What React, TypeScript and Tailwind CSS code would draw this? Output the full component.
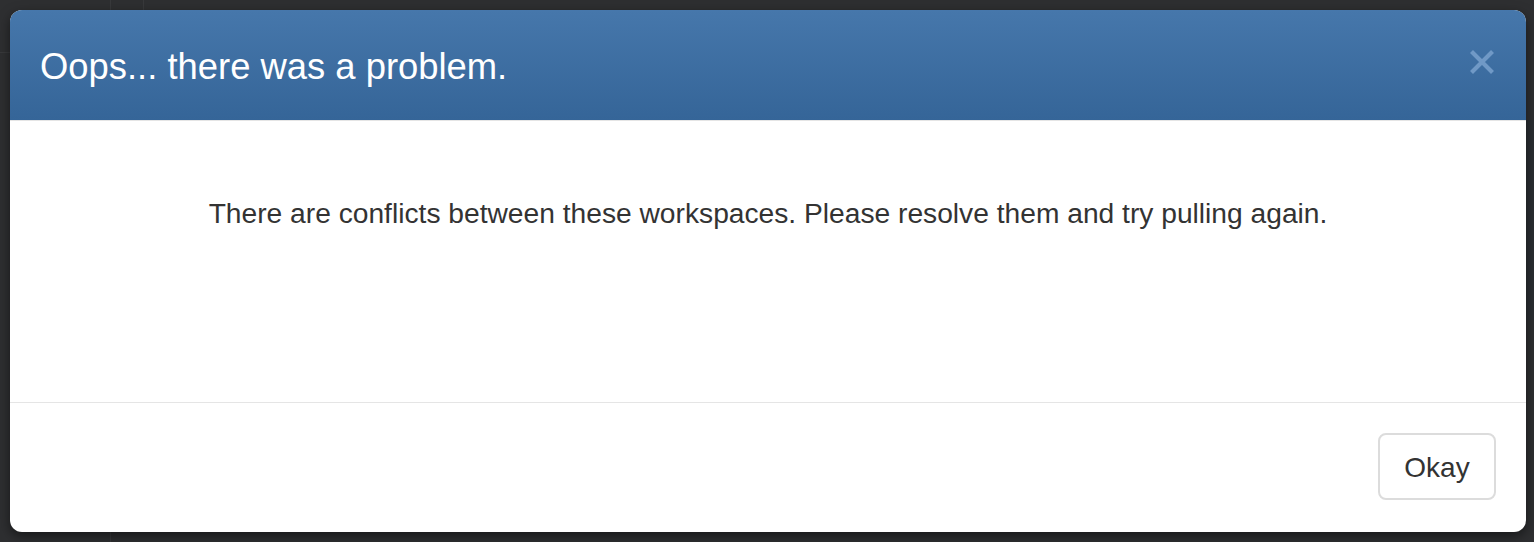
import React from "react";

export default function App() {
  return (
    <div
      className="relative w-[1534px] h-[542px] bg-[#2e2f31] overflow-hidden p-[10px]"
      style={{ fontFamily: '"Liberation Sans", Arial, sans-serif' }}
    >
      {/* faint backdrop lines */}
      <div className="absolute left-[110px] top-0 w-px h-[10px] bg-[#38393b]" />
      <div className="absolute left-[143px] top-0 w-px h-[10px] bg-[#38393b]" />
      <div className="absolute left-[110px] bottom-0 w-px h-[10px] bg-[#38393b]" />
      <div className="absolute left-0 top-[52px] w-[10px] h-px bg-[#38393b]" />
      <div className="absolute right-0 top-[120px] w-[8px] h-[200px] bg-[#2a2e32]" />

      <div className="relative flex flex-col h-[522px] w-[1516px] rounded-[12px] bg-white overflow-hidden shadow-[0_4px_12px_rgba(0,0,0,0.5)]">
        <div className="flex items-center justify-between h-[111px] px-[30px] bg-gradient-to-b from-[#4677ab] to-[#356598] border-b-[1px] border-[#e5e5e5]">
          <h4 className="text-[36.4px] leading-[40px] text-white font-normal pt-[4px]">
            Oops... there was a problem.
          </h4>
          <svg width="26" height="26" viewBox="0 0 26 26" className="mr-[1px] mb-[6px]">
            <path
              d="M2.5 2.5 L23.5 23.5 M23.5 2.5 L2.5 23.5"
              stroke="#7099c6"
              strokeWidth="4.2"
              strokeLinecap="butt"
            />
          </svg>
        </div>
        <div className="flex-1 flex justify-center pt-[72px] border-b border-[#e5e5e5]">
          <p className="text-[28.2px] leading-[40px] text-[#333333] h-fit">
            There are conflicts between these workspaces. Please resolve them and try pulling again.
          </p>
        </div>
        <div className="flex justify-end items-start h-[129px] pt-[30px] px-[30px]">
          <button className="w-[118px] h-[67px] rounded-[8px] border-2 border-[#dcdcdc] bg-white text-[28px] text-[#333333] leading-none pt-[3px]">
            Okay
          </button>
        </div>
      </div>
    </div>
  );
}
